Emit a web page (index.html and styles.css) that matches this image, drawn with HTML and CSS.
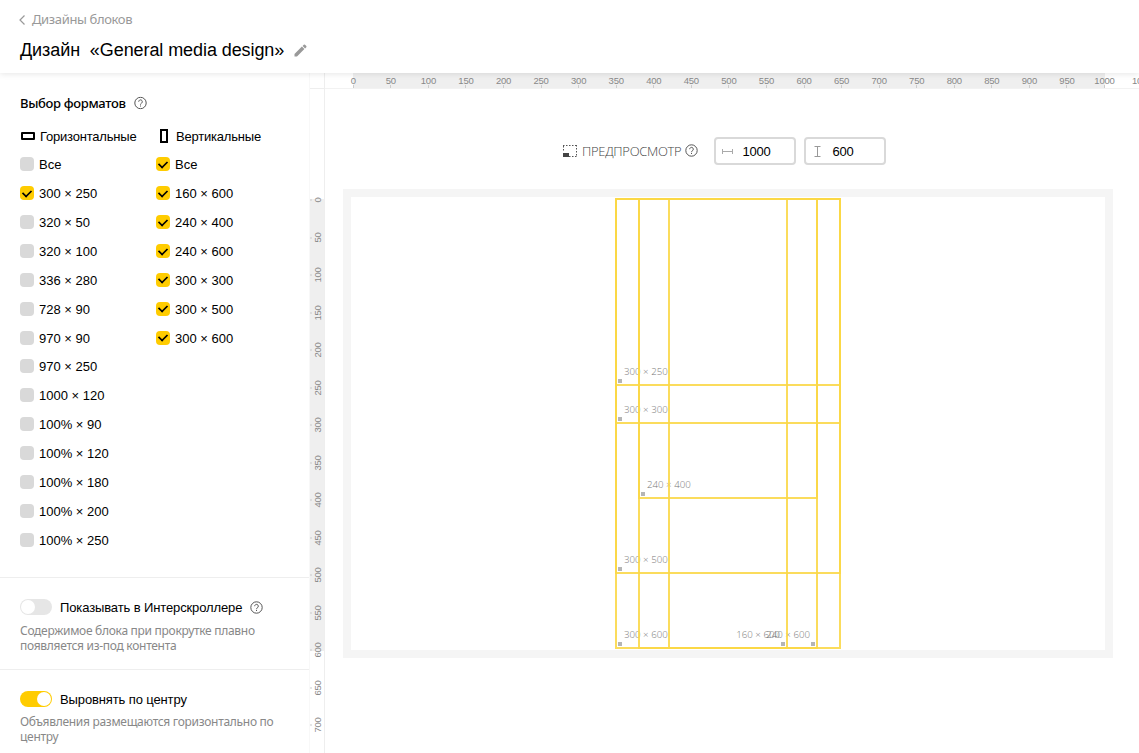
FILE: index.html
```html
<!DOCTYPE html>
<html lang="ru">
<head>
<meta charset="utf-8">
<title>Дизайн «General media design»</title>
<link rel="stylesheet" href="styles.css">
</head>
<body>
<svg class="defs" width="0" height="0">
  <symbol id="help" viewBox="0 0 13 13"><circle cx="6.500" cy="6.500" r="5.700" fill="none" stroke="#555" stroke-width="1"/><path d="M4.700 5.200a1.800 1.800 0 1 1 2.900 1.400c-.7.5-1.100.8-1.100 1.600" fill="none" stroke="#555" stroke-width="1"/><path d="M6 9.100h1v1H6z" fill="#555"/></symbol>
</svg>
<header class="header">
  <a class="back"><svg width="6" height="10" viewBox="0 0 6 10"><path d="M5.500.5 1 5l4.500 4.500" fill="none" stroke="#999" stroke-width="1.200"/></svg><span class="back-text">Дизайны блоков</span></a>
  <div class="title-row"><h1 class="title">Дизайн&nbsp; «General media design»</h1><svg class="pencil" width="13" height="13" viewBox="0 0 13 13"><path d="M.5 12.500V10l7.400-7.400 2.500 2.500L3 12.500zM8.600 1.900 9.800.700q.6-.5 1.200 0l1.300 1.300q.5.600 0 1.200L11.100 4.400z" fill="#999"/></svg></div>
</header>
<div class="body">
  <aside class="sidebar">
    <section class="formats">
      <div class="heading"><span class="heading-text">Выбор форматов</span><svg class="help"><use href="#help"/></svg></div>
      <div class="columns">
        <div class="column">
          <div class="col-title"><i class="shape wide"></i><span>Горизонтальные</span></div>
          <label class="option"><i class="box"></i><span>Все</span></label>
          <label class="option"><i class="box on"></i><span>300 × 250</span></label>
          <label class="option"><i class="box"></i><span>320 × 50</span></label>
          <label class="option"><i class="box"></i><span>320 × 100</span></label>
          <label class="option"><i class="box"></i><span>336 × 280</span></label>
          <label class="option"><i class="box"></i><span>728 × 90</span></label>
          <label class="option"><i class="box"></i><span>970 × 90</span></label>
          <label class="option"><i class="box"></i><span>970 × 250</span></label>
          <label class="option"><i class="box"></i><span>1000 × 120</span></label>
          <label class="option"><i class="box"></i><span>100% × 90</span></label>
          <label class="option"><i class="box"></i><span>100% × 120</span></label>
          <label class="option"><i class="box"></i><span>100% × 180</span></label>
          <label class="option"><i class="box"></i><span>100% × 200</span></label>
          <label class="option"><i class="box"></i><span>100% × 250</span></label>
        </div>
        <div class="column">
          <div class="col-title"><i class="shape tall"></i><span>Вертикальные</span></div>
          <label class="option"><i class="box on"></i><span>Все</span></label>
          <label class="option"><i class="box on"></i><span>160 × 600</span></label>
          <label class="option"><i class="box on"></i><span>240 × 400</span></label>
          <label class="option"><i class="box on"></i><span>240 × 600</span></label>
          <label class="option"><i class="box on"></i><span>300 × 300</span></label>
          <label class="option"><i class="box on"></i><span>300 × 500</span></label>
          <label class="option"><i class="box on"></i><span>300 × 600</span></label>
        </div>
      </div>
    </section>
    <section class="setting">
      <div class="setting-row"><i class="toggle"></i><span class="setting-name">Показывать в Интерскроллере</span><svg class="help"><use href="#help"/></svg></div>
      <p class="note">Содержимое блока при прокрутке плавно<br>появляется из-под контента</p>
    </section>
    <section class="setting">
      <div class="setting-row"><i class="toggle active"></i><span class="setting-name">Выровнять по центру</span></div>
      <p class="note">Объявления размещаются горизонтально по<br>центру</p>
    </section>
  </aside>
  <div class="ruler-y">
    <div class="corner"></div>
    <div class="scale-y"><span>0</span><span>50</span><span>100</span><span>150</span><span>200</span><span>250</span><span>300</span><span>350</span><span>400</span><span>450</span><span>500</span><span>550</span><span>600</span><span>650</span><span>700</span></div>
  </div>
  <main class="main">
    <div class="ruler-x"><div class="scale-x"><span>0</span><span>50</span><span>100</span><span>150</span><span>200</span><span>250</span><span>300</span><span>350</span><span>400</span><span>450</span><span>500</span><span>550</span><span>600</span><span>650</span><span>700</span><span>750</span><span>800</span><span>850</span><span>900</span><span>950</span><span>1000</span><span>1050</span></div></div>
    <div class="toolbar">
      <svg width="16" height="14" viewBox="0 0 16 14"><path d="M1 1.500h14M14.500 1v12M1.500 2v6M7 12.500h8" fill="none" stroke="#555" stroke-dasharray="1.500 1.500"/><path d="M1 9h6v4H1z" fill="#444"/></svg>
      <span class="preview-label">ПРЕДПРОСМОТР</span>
      <svg class="help"><use href="#help"/></svg>
      <div class="field"><svg width="11" height="11" viewBox="0 0 11 11"><path d="M.5 3v5M10.500 3v5M1 5.500h9" stroke="#aaa" fill="none"/></svg><span>1000</span></div>
      <div class="field second"><svg width="11" height="11" viewBox="0 0 11 11"><path d="M2.500.5h6M2.500 10.500h6M5.500 1v9" stroke="#999" fill="none"/></svg><span>600</span></div>
    </div>
    <div class="canvas">
      <div class="ad a600"><span>300 × 600</span></div>
      <div class="ad a500"><span>300 × 500</span></div>
      <div class="ad a300"><span>300 × 300</span></div>
      <div class="ad a250"><span>300 × 250</span></div>
      <div class="ad b400"><span>240 × 400</span></div>
      <div class="ad b600 right"><span>240 × 600</span></div>
      <div class="ad c600 right"><span>160 × 600</span></div>
    </div>
  </main>
</div>
</body>
</html>
```
FILE: styles.css
```css
* { box-sizing: border-box; }
body { margin: 0; height: 753px; overflow: hidden; background: #fff; color: #000; font: 13px/16px "Liberation Sans", Arial, sans-serif; display: flex; flex-direction: column; }
.defs { position: absolute; }
span { white-space: nowrap; }
.help { width: 13px; height: 13px; flex: none; }

.header { height: 73px; flex: none; padding: 11px 20px 0 19px; box-shadow: 0 1px 6px rgba(0,0,0,.1); position: relative; z-index: 2; background: #fff; }
.back { display: flex; align-items: center; gap: 7px; height: 17px; color: #999; font: 13px/17px "Noto Sans", sans-serif; }
.back-text { letter-spacing: -.36px; }
.title-row { display: flex; align-items: center; margin-top: 11px; height: 22px; padding-left: 1px; }
.title { margin: 0; font-size: 18px; font-weight: 400; line-height: 22px; letter-spacing: -.08px; white-space: nowrap; }
.pencil { margin-left: 10px; }

.body { display: flex; flex: 1; min-height: 0; }
.sidebar { width: 309px; flex: none; }
.formats { height: 504px; padding: 22px 20px 0; }
.heading { display: flex; align-items: center; height: 16px; gap: 8px; }
.heading-text { font: 500 13px/16px "Noto Sans", sans-serif; letter-spacing: -.34px; }
.heading .help { transform: translateY(-.5px); }
.columns { display: flex; margin-top: 17px; }
.column { width: 136px; flex: none; }
.col-title { display: flex; align-items: center; height: 16px; margin-bottom: 6px; gap: 5px; letter-spacing: -.2px; }
.col-title span { padding-top: 2px; }
.shape { border: 2px solid #000; flex: none; }
.wide { width: 14px; height: 8px; margin-left: 1px; border-radius: 1px; }
.tall { width: 8px; height: 14px; margin: 0 3px 0 4px; }
.option { display: flex; align-items: center; gap: 5px; height: 28.860px; }
.option span { padding-top: 2px; }
.box { width: 14px; height: 14px; border-radius: 4px; background: #d9d9d9; flex: none; display: flex; align-items: center; justify-content: center; }
.box.on { background: #fc0; }
.box.on::after { content: ""; width: 8px; height: 5px; border: solid #000; border-width: 0 0 2px 2px; transform: translateY(-1px) rotate(-45deg) scale(.85); }
.setting { border-top: 1px solid #eee; height: 92px; padding: 21px 20px 0; }
.setting-row { display: flex; align-items: center; height: 16px; }
.setting-name { margin: 0 8px; padding-top: 1px; letter-spacing: -.12px; }
.toggle { width: 32px; height: 16px; border-radius: 8px; background: #e6e6e6; display: flex; padding: 1px; flex: none; }
.toggle::after { content: ""; width: 14px; height: 14px; border-radius: 50%; background: #fff; }
.toggle.active { background: #fc0; justify-content: flex-end; }
.note { margin: 7.500px 0 0; color: #888; font: 12px/15px "Noto Sans", sans-serif; letter-spacing: -.29px; white-space: nowrap; }
.setting:last-child .note { margin-top: 7px; }

.ruler-y { width: 16px; flex: none; border-right: 1px solid #eee; border-left: 1px solid #f8f8f8; }
.corner { height: 16px; border-bottom: 1px solid #eee; }
.scale-y { margin-top: 92px; color: #888; background: linear-gradient(#efefef 0 452px, transparent 452px); transform: translateY(18px); }
.scale-y span { display: flex; align-items: center; justify-content: center; writing-mode: vertical-rl; transform: rotate(180deg) translateY(18px); width: 14px; height: 37.500px; font-size: 9.500px; line-height: 13px; letter-spacing: -.3px; background: linear-gradient(#ccc, #ccc) 12px 50% / 2px 1px no-repeat; }

.main { flex: 1; min-width: 0; overflow: hidden; }
.ruler-x { height: 16px; overflow: hidden; border-bottom: 1px solid #f2f2f2; background: linear-gradient(90deg, transparent 28px, #efefef 28px 780px, transparent 780px); }
.scale-x { display: flex; padding-left: 9.500px; color: #888; }
.scale-x span { flex: none; width: 37.570px; height: 15px; text-align: center; font-size: 9.500px; line-height: 16px; letter-spacing: -.2px; background: linear-gradient(#ccc, #ccc) 50% 100% / 1px 3px no-repeat; }
.toolbar { display: flex; align-items: center; height: 28px; margin: 48px 0 0 237px; }
.toolbar > .help { transform: translateY(-1px); }
.preview-label { margin: 0 4px 0 4px; color: #444; font: 300 13px/18px "Open Sans", sans-serif; letter-spacing: -.3px; }
.field { display: flex; align-items: center; width: 82px; height: 28px; border: 2px solid #d9d9d9; border-radius: 4px; margin-left: 16px; padding-left: 6px; gap: 9px; font-size: 13px; }
.field span { padding-top: 1px; letter-spacing: -.2px; }
.field.second { margin-left: 8px; }

/* Preview surface: formats are drawn at three quarters of their size. */
.canvas { position: relative; width: 770px; height: 469px; margin: 24px 0 0 18px; border: 8px solid #f5f5f5; }
.ad { position: absolute; top: 1px; border: 2px solid rgba(250,215,70,.88); font: 300 9.700px/13px "Open Sans", sans-serif; color: #777; }
.ad span { position: absolute; left: 7px; bottom: 6px; }
.ad::after { content: ""; position: absolute; left: 1px; bottom: 1px; width: 4px; height: 4px; background: #b5b5b5; }
.right span { left: auto; right: 6px; }
.right::after { left: auto; right: 1px; }
.a600, .a500, .a300, .a250 { left: 264px; width: 226px; }
.a600, .b600, .c600 { height: 451px; }
.a500 { height: 376px; }
.a300 { height: 226px; }
.a250 { height: 188px; }
.b400, .b600 { left: 287px; width: 180px; }
.b400 { height: 301px; }
.c600 { left: 317px; width: 120px; }
```
